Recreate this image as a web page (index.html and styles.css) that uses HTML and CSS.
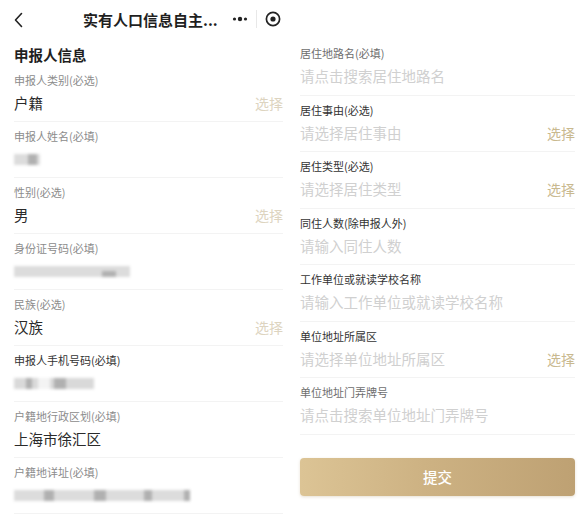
FILE: index.html
```html
<!DOCTYPE html>
<html lang="zh-CN">
<head>
<meta charset="utf-8">
<title>实有人口信息自主申报</title>
<link rel="stylesheet" href="styles.css">
</head>
<body>
<div class="page">
  <section class="panel left">
    <header class="nav">
      <span class="back">
        <svg width="9" height="16" viewBox="0 0 9 16"><path d="M7.5 1.5 L1.5 8 L7.5 14.5" fill="none" stroke="#222" stroke-width="1.6" stroke-linecap="round" stroke-linejoin="round"/></svg>
      </span>
      <span class="title">实有人口信息自主...</span>
      <span class="capsule">
        <svg class="dots" width="16" height="6" viewBox="0 0 16 6"><circle cx="2.5" cy="3" r="1.6" fill="#222"/><circle cx="8" cy="3" r="2.2" fill="#222"/><circle cx="13.5" cy="3" r="1.6" fill="#222"/></svg>
        <span class="sep"></span>
        <svg width="16" height="16" viewBox="0 0 16 16"><circle cx="8" cy="8" r="6.6" fill="none" stroke="#222" stroke-width="1.7"/><circle cx="8" cy="8" r="2.6" fill="#222"/></svg>
      </span>
    </header>
    <h2 class="heading">申报人信息</h2>

    <div class="row">
      <div class="label">申报人类别(必选)</div>
      <div class="line"><span class="value">户籍</span><span class="pick pale">选择</span></div>
    </div>
    <div class="row">
      <div class="label">申报人姓名(必填)</div>
      <div class="line"><span class="blur b-name"><i class="dk d1"></i></span></div>
    </div>
    <div class="row">
      <div class="label">性别(必选)</div>
      <div class="line"><span class="value">男</span><span class="pick pale">选择</span></div>
    </div>
    <div class="row">
      <div class="label">身份证号码(必填)</div>
      <div class="line"><span class="blur b-id"><i class="dk d2"></i></span></div>
    </div>
    <div class="row">
      <div class="label">民族(必选)</div>
      <div class="line"><span class="value">汉族</span><span class="pick pale">选择</span></div>
    </div>
    <div class="row">
      <div class="label dark">申报人手机号码(必填)</div>
      <div class="line"><span class="blur b-phone"><i class="dk d3"></i><i class="dk d4"></i></span></div>
    </div>
    <div class="row">
      <div class="label">户籍地行政区划(必填)</div>
      <div class="line"><span class="value">上海市徐汇区</span></div>
    </div>
    <div class="row">
      <div class="label">户籍地详址(必填)</div>
      <div class="line"><span class="blur b-addr"><i class="dk d5"></i><i class="dk d6"></i><i class="dk d7"></i><i class="dk d8"></i></span></div>
    </div>
  </section>

  <section class="panel right">
    <div class="row r">
      <div class="label mid">居住地路名(必填)</div>
      <div class="line"><span class="ph">请点击搜索居住地路名</span></div>
    </div>
    <div class="row r">
      <div class="label dark">居住事由(必选)</div>
      <div class="line"><span class="ph">请选择居住事由</span><span class="pick gold">选择</span></div>
    </div>
    <div class="row r">
      <div class="label dark">居住类型(必选)</div>
      <div class="line"><span class="ph">请选择居住类型</span><span class="pick gold">选择</span></div>
    </div>
    <div class="row r">
      <div class="label dark">同住人数(除申报人外)</div>
      <div class="line"><span class="ph">请输入同住人数</span></div>
    </div>
    <div class="row r">
      <div class="label dark">工作单位或就读学校名称</div>
      <div class="line"><span class="ph">请输入工作单位或就读学校名称</span></div>
    </div>
    <div class="row r">
      <div class="label dark">单位地址所属区</div>
      <div class="line"><span class="ph">请选择单位地址所属区</span><span class="pick gold">选择</span></div>
    </div>
    <div class="row r">
      <div class="label mid">单位地址门弄牌号</div>
      <div class="line"><span class="ph">请点击搜索单位地址门弄牌号</span></div>
    </div>
    <button class="submit" type="button">提交</button>
  </section>
</div>
</body>
</html>
```

FILE: styles.css
```css
html, body {
  margin: 0;
  padding: 0;
  background: #ffffff;
}

body {
  font-family: "Noto Sans CJK SC", "Noto Sans", sans-serif;
  color: #2b2b2b;
  width: 585px;
  height: 527px;
  overflow: hidden;
}

.page {
  display: flex;
  width: 585px;
}

.panel {
  box-sizing: border-box;
}

.left {
  width: 292px;
  padding: 0 9px 0 14px;
}

.right {
  width: 293px;
  padding: 39px 10px 0 8px;
}

.nav {
  height: 38px;
  display: flex;
  align-items: center;
}

.back {
  width: 69px;
  display: flex;
  align-items: center;
  padding-top: 1px;
}

.title {
  font-size: 15px;
  font-weight: 700;
  color: #1f1f1f;
}

.capsule {
  margin-left: auto;
  margin-right: 2px;
  display: flex;
  align-items: center;
}

.dots {
  margin-right: 8px;
}

.sep {
  width: 1px;
  height: 18px;
  background: #e8e8e8;
  margin-right: 8px;
}

.heading {
  margin: 0 0 1px;
  padding-top: 7px;
  font-size: 14.5px;
  line-height: 20px;
  font-weight: 700;
  color: #1f1f1f;
}

.row {
  padding: 6px 0 7px;
  border-bottom: 1px solid #f3f3f3;
}

.row.r {
  padding-bottom: 7.5px;
}

.label {
  font-size: 11px;
  line-height: 16px;
  color: #8c8c8c;
}

.label.mid {
  color: #6e6e6e;
}

.label.dark {
  color: #333333;
}

.line {
  margin-top: 4px;
  height: 22px;
  display: flex;
  align-items: center;
  justify-content: space-between;
}

.value {
  font-size: 14.5px;
  line-height: 22px;
  color: #2a2a2a;
}

.ph {
  font-size: 14.5px;
  line-height: 22px;
  color: #d0d0d0;
}

.pick {
  font-size: 14px;
  line-height: 22px;
}

.pick.pale {
  color: #ddd4c0;
}

.pick.gold {
  color: #c9b98f;
}

.blur {
  display: block;
  position: relative;
  height: 11px;
  background: #dcdcdc;
  filter: blur(1.5px);
}

.b-name { width: 26px; }
.b-id { width: 116px; }
.b-phone { width: 80px; background: linear-gradient(90deg, #d9d9d9 0 30%, #f3f3f3 30% 45%, #d9d9d9 45%); }
.b-addr { width: 176px; }

.dk {
  position: absolute;
  top: 0;
  bottom: 0;
  background: #b0b0b0;
}

.d1 { left: 14px; width: 9px; }
.d2 { left: 88px; width: 14px; top: 5px; }
.d3 { left: 12px; width: 6px; }
.d4 { left: 40px; width: 12px; }
.d5 { left: 30px; width: 10px; }
.d6 { left: 80px; width: 12px; }
.d7 { left: 130px; width: 8px; }
.d8 { left: 170px; width: 6px; }

.submit {
  display: block;
  width: 275px;
  height: 38px;
  margin: 23px 0 0 0;
  border: none;
  border-radius: 4px;
  background: linear-gradient(90deg, #dcc495 0%, #cdb283 45%, #bea173 100%);
  box-shadow: 0 1px 3px rgba(160, 130, 80, 0.25);
  color: #ffffff;
  font-family: "Noto Sans CJK SC", "Noto Sans", sans-serif;
  font-size: 14.5px;
  font-weight: 500;
  padding: 0;
}
```
